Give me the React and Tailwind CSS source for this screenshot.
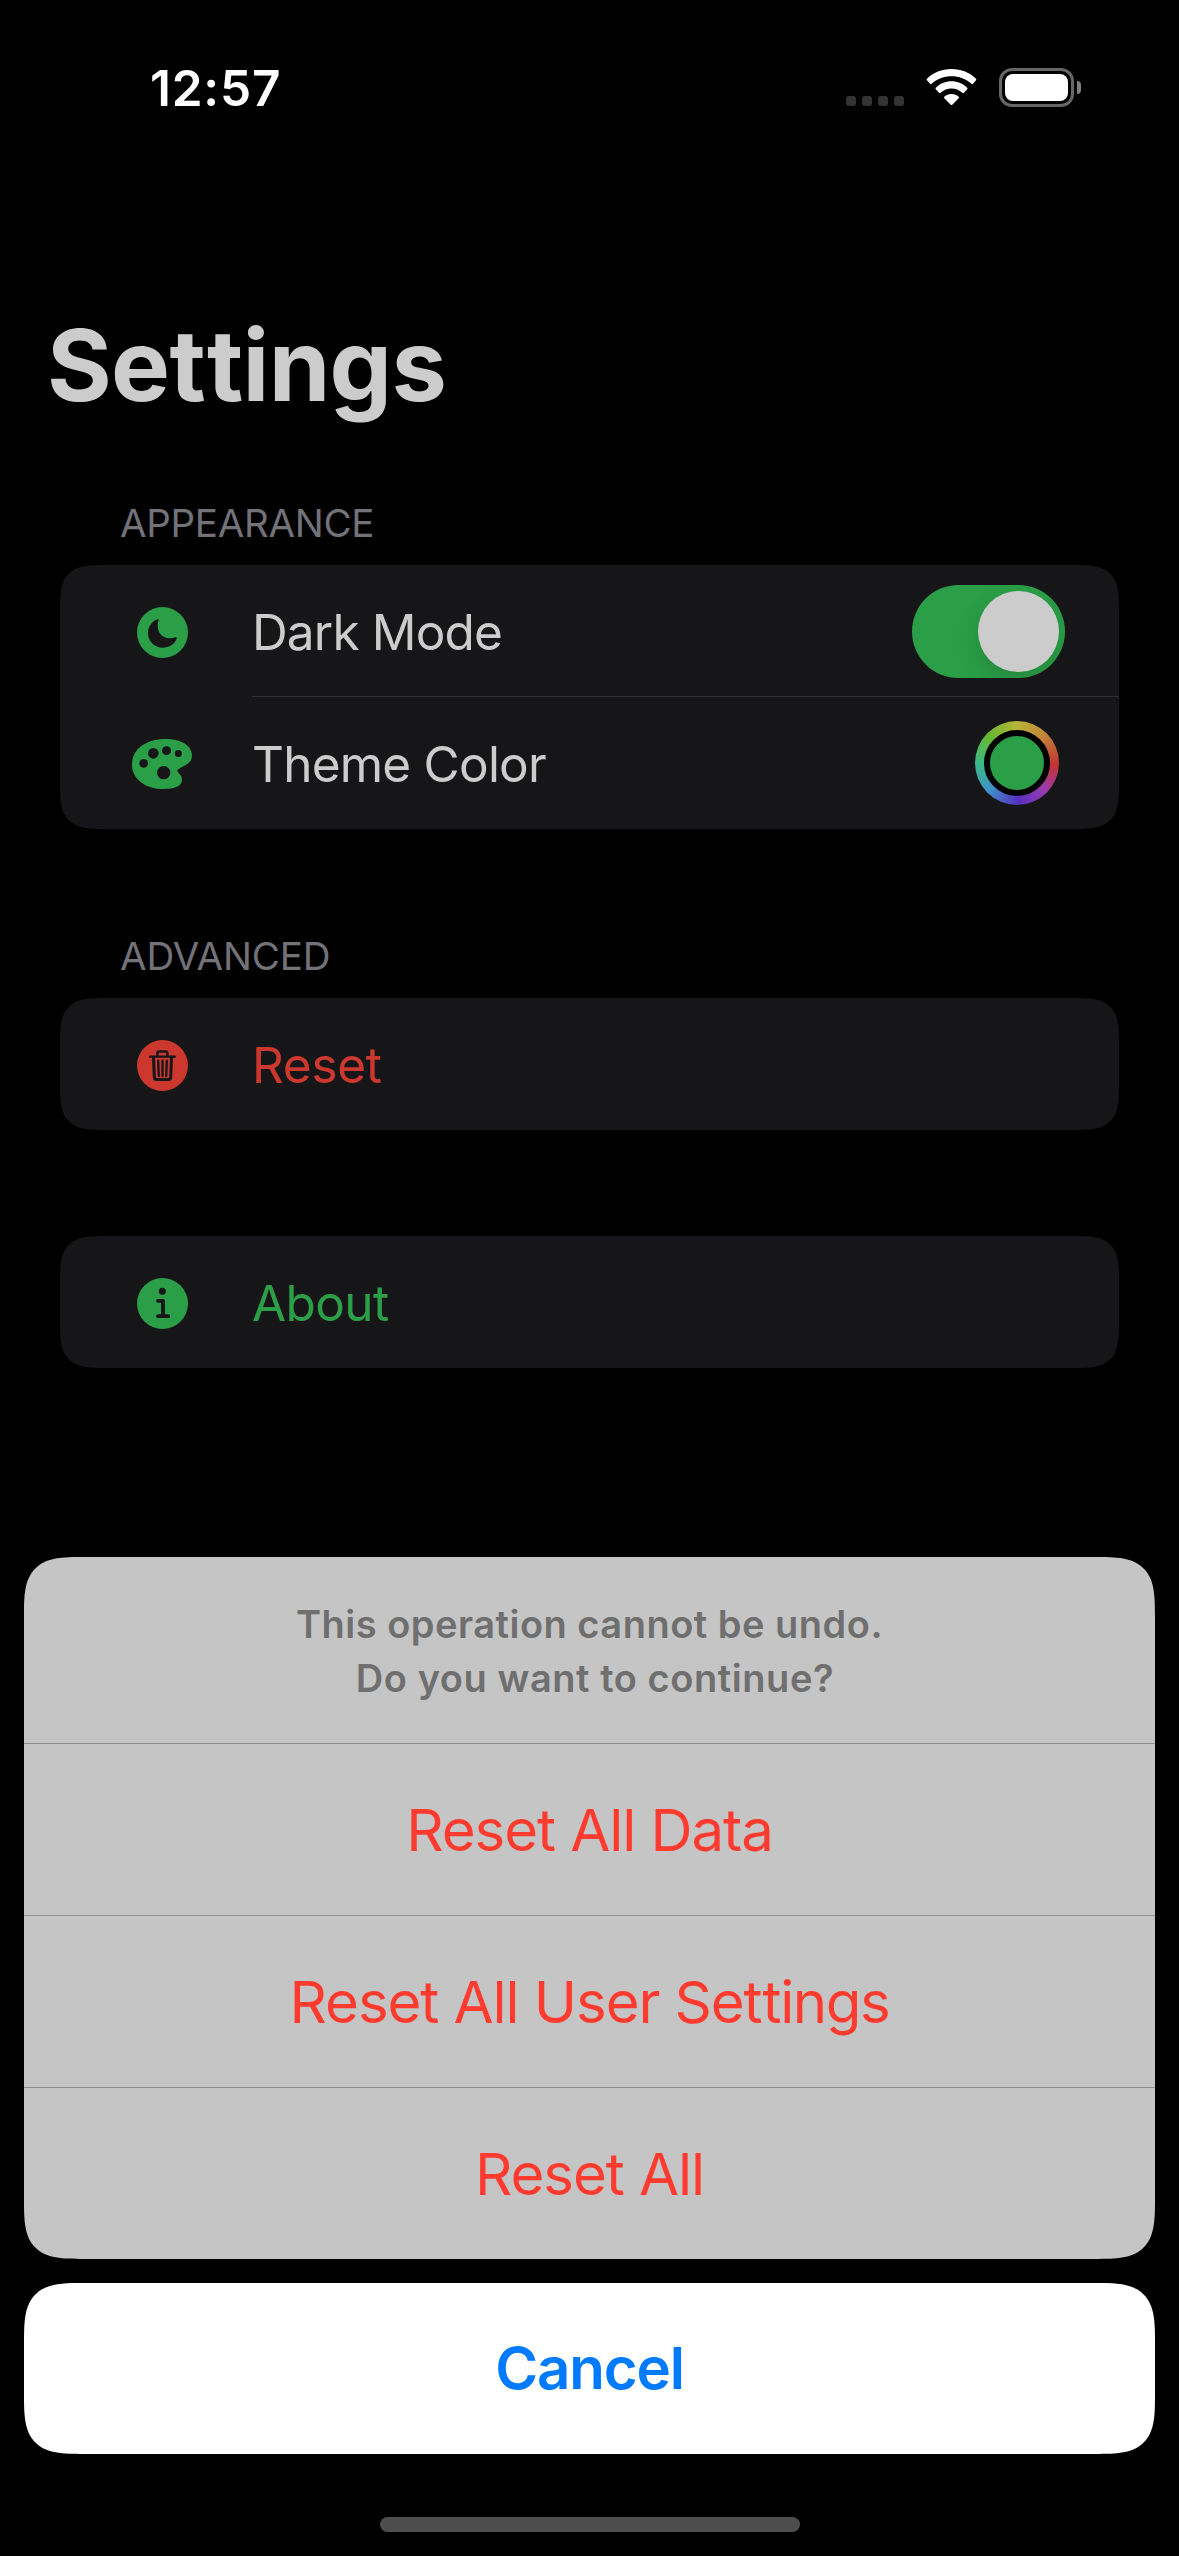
function StatusBar() {
  return (
    <header className="flex h-[175px] shrink-0 items-start justify-between pl-[150px] pr-[98px]">
      <span className="mt-[58px] text-[49.5px] leading-[60px] font-semibold tracking-[0.8px] text-white">
        12:57
      </span>
      <div className="mt-[68px] flex h-[39px] items-start">
        <div className="mt-7 flex gap-[6px]">
          <i className="size-[10px] rounded-[3px] bg-[#333333]" />
          <i className="size-[10px] rounded-[3px] bg-[#333333]" />
          <i className="size-[10px] rounded-[3px] bg-[#333333]" />
          <i className="size-[10px] rounded-[3px] bg-[#333333]" />
        </div>
        <svg className="mt-px ml-[22px] h-[37px] w-[51px]" viewBox="0 0 153 111" fill="#fff">
          <path d="M76.500 0C106 0 131 11 150 29Q152.500 31.500 150 34L141 44Q138.500 47 136 44.500C120 30 99 22 76.500 22S33 30 17 44.500Q14.500 47 12 44L3 34Q.500 31.500 3 29C22 11 47 0 76.500 0Z" />
          <path d="M76.500 37C95 37 111 44 123.500 56Q126 58.500 123.500 61L114 71Q111.500 73.500 109 71C100 63 89 58.500 76.500 58.500S53 63 44 71Q41.500 73.500 39 71L29.500 61Q27 58.500 29.500 56C42 44 58 37 76.500 37Z" />
          <path d="M76.500 75C85 75 92 78 98 83Q100.500 85.500 98 88L79 107Q76.500 109.500 74 107L55 88Q52.500 85.500 55 83C61 78 68 75 76.500 75Z" />
        </svg>
        <div className="ml-[22px] h-[39px] w-[75px] rounded-[13px] border-[3px] border-[#666666] p-[3px]">
          <div className="h-full w-full rounded-[8px] bg-white" />
        </div>
        <div className="mt-[13px] ml-[3px] h-[13px] w-1 rounded-r-full bg-[#808080]" />
      </div>
    </header>
  );
}

function MoonIcon() {
  return (
    <svg className="size-[51px]" viewBox="0 0 153 153">
      <circle cx="76.500" cy="76.500" r="76.500" fill="#2a9f47" />
      <path
        fill="#161618"
        d="M61 37C44 44 33 60 33 78C33 103 52 122 77 122C97 122 113 111 119 95C120 92 118 90 115 91C110 93 105 94 100 94C78 94 62 79 62 56C62 50 63 45 65 40C66 37 64 35.500 61 37Z"
      />
    </svg>
  );
}

function PaletteIcon() {
  return (
    <svg className="mr-px h-[50px] w-[60px]" viewBox="0 0 180 150">
      <path
        fill="#2a9f47"
        d="M100 0C148 0 180 20 180 50C180 66 170 75 150 84C141 88 136 92 136 95C136 101 150 106 150 123C150 141 128 150 95 150C40 150 0 120 0 77C0 30 42 0 100 0Z"
      />
      <g fill="#161618">
        <circle cx="64" cy="43" r="16" />
        <circle cx="103.500" cy="35" r="13.500" />
        <circle cx="139" cy="43.500" r="10.500" />
        <circle cx="35" cy="73" r="13" />
        <circle cx="95" cy="101" r="20" />
      </g>
    </svg>
  );
}

function TrashIcon() {
  return (
    <svg className="size-[51px]" viewBox="0 0 153 153">
      <circle cx="76.500" cy="76.500" r="76.500" fill="#cc372e" />
      <g fill="none" stroke="#161618" strokeLinecap="round" strokeLinejoin="round">
        <path strokeWidth="7" d="M39.500 50H113.500" />
        <path strokeWidth="8" d="M61 48V40Q61 34.500 67 34.500H85Q91 34.500 91 40V48" />
        <path strokeWidth="9" d="M49.500 52L52 112Q52.500 118.500 59 118.500H94Q100.500 118.500 101 112L103.500 52" />
        <path strokeWidth="7" d="M63.500 62L65.500 108M76.500 62V108M89.500 62L87.500 108" />
      </g>
    </svg>
  );
}

function InfoIcon() {
  return (
    <svg className="size-[51px]" viewBox="0 0 153 153">
      <circle cx="76.500" cy="76.500" r="76.500" fill="#2a9f47" />
      <circle cx="76" cy="40" r="10.500" fill="#161618" />
      <path
        fill="none"
        stroke="#161618"
        strokeWidth="11.500"
        strokeLinecap="round"
        strokeLinejoin="round"
        d="M63 68.500H78V114.500M63 114.500H93.500"
      />
    </svg>
  );
}

function Card({ children }) {
  return (
    <div className="mx-[60px] overflow-hidden rounded-[46px] bg-[#161618] [corner-shape:superellipse(1.72)]">
      {children}
    </div>
  );
}

function Row({ icon, label, labelClass, divided, children }) {
  return (
    <div className="flex h-[132px]">
      <div className="flex w-[192px] items-center justify-center pt-0.5 pl-[13px]">{icon}</div>
      <div
        className={
          divided
            ? "flex flex-1 items-center justify-between border-b border-[#303033]"
            : "flex flex-1 items-center justify-between"
        }
      >
        <span className={"pt-0.5 text-[49.5px] leading-[60px] " + labelClass}>{label}</span>
        {children}
      </div>
    </div>
  );
}

function Toggle() {
  return (
    <div className="mt-0.5 mr-[54px] flex h-[93px] w-[153px] items-center justify-end overflow-hidden rounded-full bg-[#2a9f47] pr-[6px]">
      <div className="size-[81px] rounded-full bg-[#cccccc] shadow-[0_9px_24px_rgba(0,0,0,0.15)]" />
    </div>
  );
}

function ColorWell() {
  return (
    <div className="mr-[60px] flex size-[84px] items-center justify-center rounded-full bg-[conic-gradient(#b8b436,#c2843a_45deg,#c23530_92deg,#9a3ab0_135deg,#5530c0_178deg,#3f90c8_225deg,#38b888_268deg,#68b830_315deg,#b8b436)]">
      <div className="size-[66px] rounded-full border-[6px] border-black bg-[#2a9f47]" />
    </div>
  );
}

function SheetAction({ children }) {
  return (
    <button className="flex h-[172px] w-full items-center justify-center border-t border-[#8f8f8f] pt-0.5 text-[58.2px] tracking-[-1.1px] text-[#ff3b30]">
      <span>{children}</span>
    </button>
  );
}

function ActionSheet() {
  return (
    <div className="absolute inset-x-6 bottom-6 flex flex-col items-center">
      <div className="w-full overflow-hidden rounded-[60px] bg-[#c5c5c5] [corner-shape:superellipse(1.72)]">
        <div className="flex h-[186px] flex-col items-center pt-10 text-[38px] leading-[54px] font-semibold text-[#6f6f6f]">
          <p className="tracking-[0.5px]">This operation cannot be undo.</p>
          <p className="pl-[11px] tracking-[0.56px]">Do you want to continue?</p>
        </div>
        <SheetAction>Reset All Data</SheetAction>
        <SheetAction>
          Reset All User Set<span className="ml-px tracking-[-1.4px]">tings</span>
        </SheetAction>
        <SheetAction>Reset All</SheetAction>
      </div>
      <button className="mt-6 h-[171px] w-full rounded-[60px] bg-white pt-px text-[58.2px] font-semibold tracking-[-1.15px] text-[#007aff] [corner-shape:superellipse(1.72)]">
        Cancel
      </button>
      <div className="mt-[63px] h-[15px] w-[420px] rounded-full bg-[#4d4d4d]" />
    </div>
  );
}

export default function App() {
  return (
    <div className="relative flex h-[2556px] w-[1179px] flex-col overflow-hidden bg-black font-['Inter',sans-serif]">
      <StatusBar />
      <h1 className="mt-[130px] pl-[47px] text-[99px] leading-[120px] font-bold tracking-[-0.7px] text-[#cccccc]">
        Set<span className="ml-[2px]">tings</span>
      </h1>
      <h2 className="mt-[74px] h-[66px] pl-[120px] text-[38.5px] leading-[48px] tracking-[-0.3px] text-[#727278]">
        APPEARANCE
      </h2>
      <Card>
        <Row icon={<MoonIcon />} label="Dark Mode" labelClass="tracking-[-0.85px] text-[#cccccc]" divided>
          <Toggle />
        </Row>
        <Row icon={<PaletteIcon />} label="Theme Color" labelClass="tracking-[-0.77px] text-[#cccccc]">
          <ColorWell />
        </Row>
      </Card>
      <h2 className="mt-[103px] h-[66px] pl-[120px] text-[38.5px] leading-[48px] tracking-[-0.15px] text-[#727278]">
        ADVANCED
      </h2>
      <Card>
        <Row icon={<TrashIcon />} label="Reset" labelClass="tracking-[-0.3px] text-[#cc372e]" />
      </Card>
      <div className="h-[106px]" />
      <Card>
        <Row icon={<InfoIcon />} label="About" labelClass="tracking-[-0.6px] text-[#2a9f47]" />
      </Card>
      <ActionSheet />
    </div>
  );
}
